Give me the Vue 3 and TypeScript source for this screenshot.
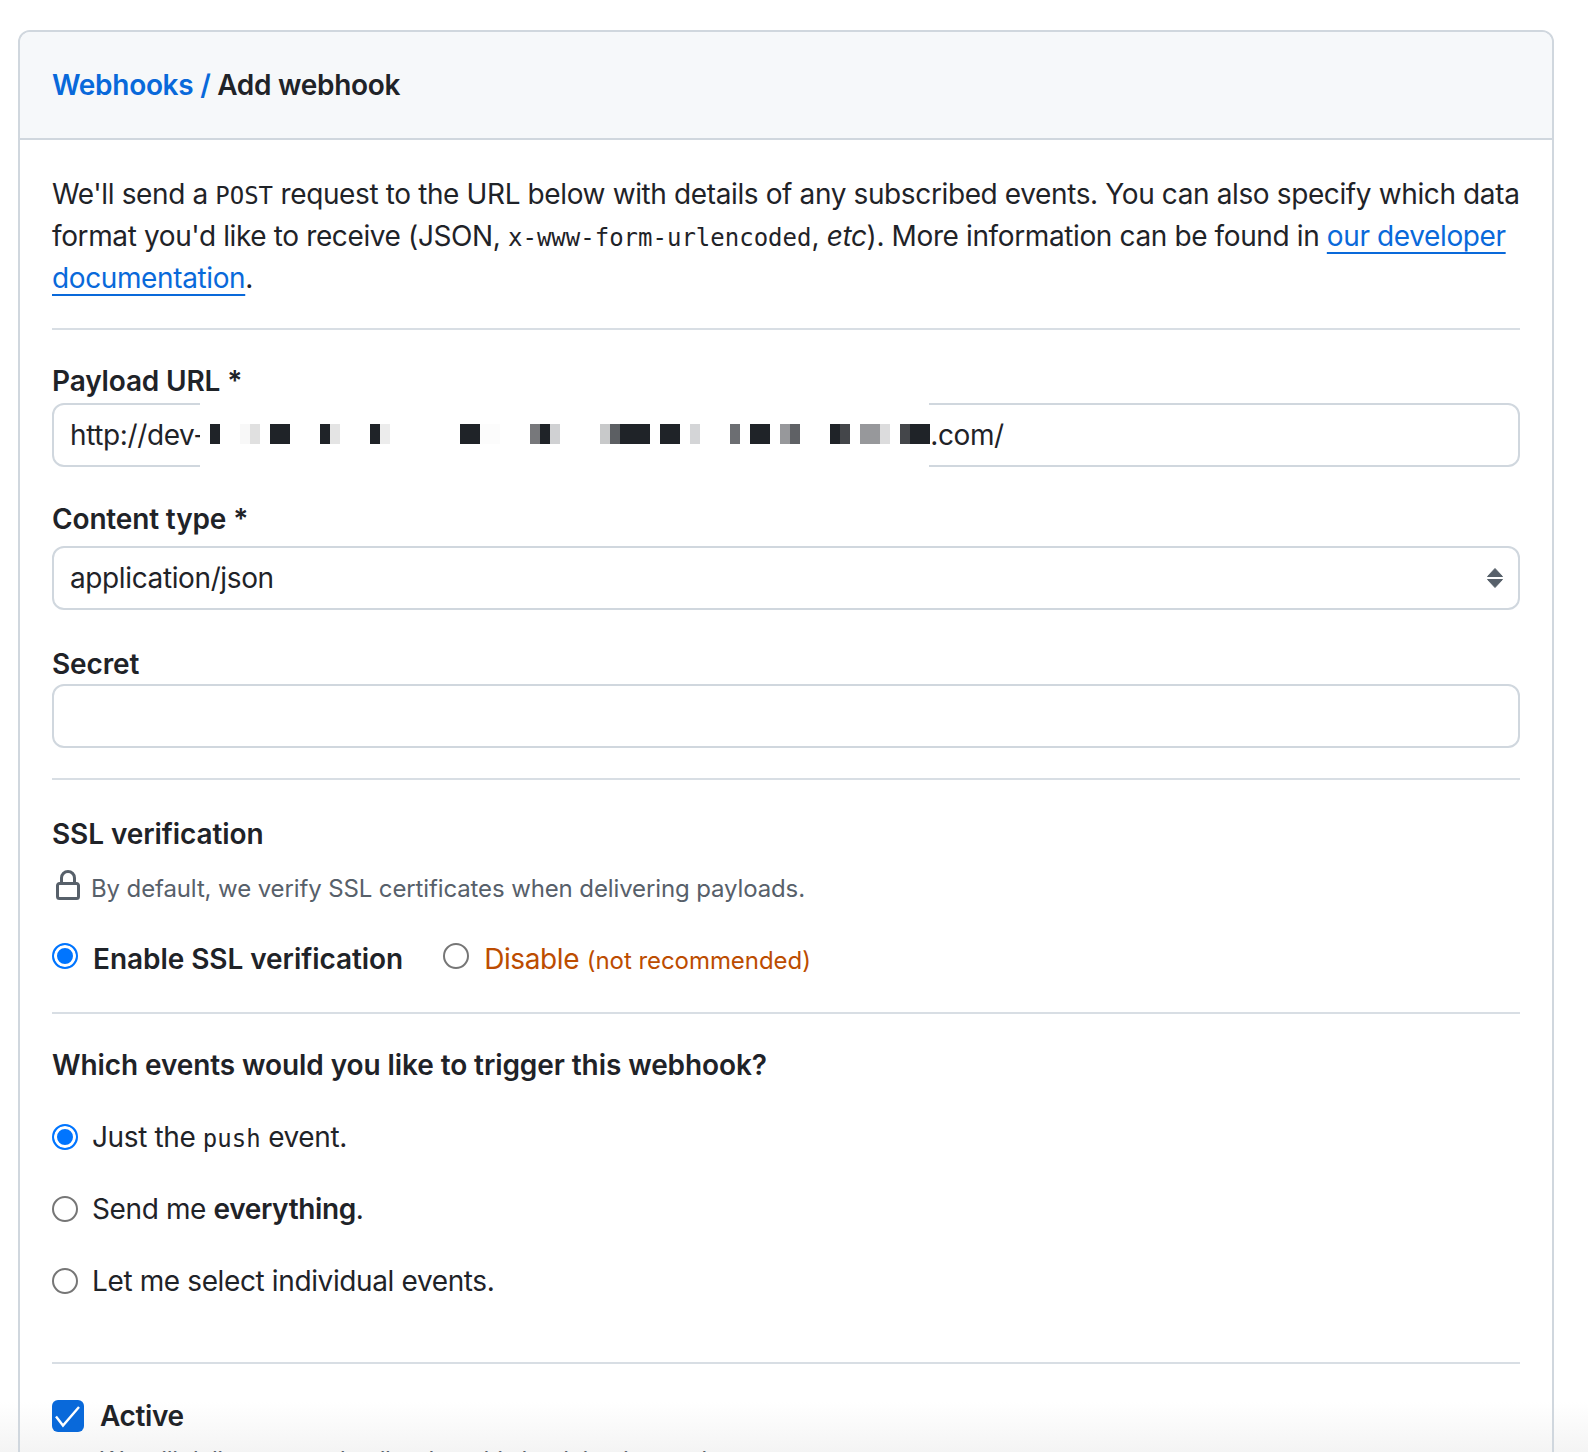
<script setup lang="ts">
const dark = '#1f2328'
const maskCells: string[] = Array(72).fill('transparent')
const paint: Array<[number, string]> = [
  [0, dark], [3, '#f8f8f8'], [4, '#e0e0e0'], [6, dark], [7, dark], [11, dark], [12, '#e4e4e4'],
  [16, dark], [17, '#ececec'], [25, dark], [26, dark], [27, '#fcfcfc'], [28, '#fcfcfc'],
  [32, '#77787b'], [33, dark], [34, '#d0d1d3'], [39, '#c8c9ca'], [40, '#5c5f63'], [41, dark], [42, dark], [43, dark],
  [45, dark], [46, dark], [48, '#d4d5d7'], [52, '#6c6e72'], [54, dark], [55, dark], [57, '#97989b'], [58, '#5f6165'],
  [62, dark], [63, '#44464a'], [65, '#97989b'], [66, '#97989b'], [67, '#dcdcdd'], [69, '#44464a'], [70, dark], [71, dark],
]
paint.forEach(([i, c]) => { maskCells[i] = c })
</script>

<template>
  <div class="page">
    <section class="card">
      <header class="card-head">
        <h1><a class="link">Webhooks</a> <span class="link">/</span> Add webhook</h1>
      </header>
      <div class="card-body">
        <p class="intro">We'll send a <code>POST</code> request to the URL below with details of any subscribed events. You can also specify which data format you'd like to receive (JSON, <code>x-www-form-urlencoded</code>, <em>etc</em>). More information can be found in <a class="link underline">our developer documentation</a>.</p>
        <hr class="rule rule-first" />

        <div class="field field-url">
          <label>Payload URL *</label>
          <div class="control url-control">
            <span>http://dev-</span><span class="url-gap"></span><span>s.com/</span>
            <div class="mask">
              <i v-for="(color, i) in maskCells" :key="i" :style="{ background: color }"></i>
            </div>
          </div>
        </div>

        <div class="field field-type">
          <label>Content type *</label>
          <div class="control select-control">
            <span>application/json</span>
            <svg class="updown" width="16" height="20" viewBox="0 0 16 20"><path d="M8 0.5 15.5 8.5H0.5Z M0.5 11.5H15.5L8 19.5Z" fill="#57606a" stroke="#57606a" stroke-width="1" stroke-linejoin="round"/></svg>
          </div>
        </div>

        <div class="field field-secret">
          <label>Secret</label>
          <div class="control"></div>
        </div>
        <hr class="rule rule-secret" />

        <h2 class="section-title ssl-title">SSL verification</h2>
        <p class="note">
          <svg class="lock" width="32" height="32" viewBox="0 0 16 16"><path fill="#57606a" d="M4 4a4 4 0 0 1 8 0v2h.25c.966 0 1.75.784 1.75 1.75v5.5A1.75 1.75 0 0 1 12.25 15h-8.5A1.75 1.75 0 0 1 2 13.25v-5.5C2 6.784 2.784 6 3.75 6H4Zm6.5 2V4a2.5 2.5 0 1 0-5 0v2ZM3.75 7.5a.25.25 0 0 0-.25.25v5.5c0 .138.112.25.25.25h8.5a.25.25 0 0 0 .25-.25v-5.5a.25.25 0 0 0-.25-.25Z"/></svg>
          <span>By default, we verify SSL certificates when delivering payloads.</span>
        </p>
        <div class="ssl-row">
          <label class="option strong"><input type="radio" name="ssl" checked /><span>Enable SSL verification</span></label>
          <label class="option danger"><input type="radio" name="ssl" /><span>Disable <small>(not recommended)</small></span></label>
        </div>
        <hr class="rule rule-ssl" />

        <h2 class="section-title">Which events would you like to trigger this webhook?</h2>
        <div class="events">
          <label class="option"><input type="radio" name="ev" checked /><span>Just the <code>push</code> event.</span></label>
          <label class="option"><input type="radio" name="ev" /><span>Send me <b>everything</b>.</span></label>
          <label class="option"><input type="radio" name="ev" /><span>Let me select individual events.</span></label>
        </div>
        <hr class="rule rule-events" />

        <div class="active">
          <span class="checkbox"><svg width="32" height="32" viewBox="0 0 32 32"><path d="M4 16.5 11 25.5 27 7" fill="none" stroke="#fff" stroke-width="2.4"/></svg></span>
          <b>Active</b>
        </div>
        <p class="active-note">We will deliver event details when this hook is triggered.</p>
      </div>
    </section>
  </div>
</template>

<style scoped>
.page {
  height: 1452px;
  overflow: hidden;
  padding: 30px 34px 0 18px;
  box-sizing: border-box;
  background: linear-gradient(to bottom, #fff 1402px, #f4f4f4 1452px);
  color: #1f2328;
  font-family: Inter, "Liberation Sans", sans-serif;
  font-size: 28px;
  line-height: 42px;
  letter-spacing: -0.38px;
}
.card {
  border: 2px solid #d0d7de;
  border-radius: 12px;
  height: 1600px;
}
.card-head {
  height: 106px;
  padding: 0 32px;
  display: flex;
  align-items: center;
  background: #f6f8fa;
  border-bottom: 2px solid #d0d7de;
  border-radius: 10px 10px 0 0;
}
h1 {
  margin: 0;
  font-size: 28px;
  font-weight: 600;
  line-height: 44px;
  letter-spacing: -0.3px;
  white-space: pre-wrap;
}
.link { color: #0969da; }
.underline {
  text-decoration: underline;
  text-underline-offset: 6px;
  text-decoration-thickness: 2px;
}
.card-body { padding: 33px 32px 0; }
.intro { margin: 0; }
code {
  font-family: "DejaVu Sans Mono", "Liberation Mono", monospace;
  font-size: 24px;
  line-height: 1;
  letter-spacing: 0;
}
em { font-style: italic; }
.rule {
  border: 0;
  height: 2px;
  margin: 0;
  background: #d8dee4;
}
.rule-first { margin-top: 29px; }
.field label {
  display: block;
  font-weight: 600;
  line-height: 40px;
  letter-spacing: -0.15px;
}
.field-url { margin-top: 31px; }
.field-url label { margin-bottom: 2px; }
.field-type { margin-top: 32px; }
.field-type label { margin-bottom: 7px; }
.field-secret { margin-top: 34px; }
.control {
  position: relative;
  height: 64px;
  padding: 0 16px;
  display: flex;
  align-items: center;
  border: 2px solid #d0d7de;
  border-radius: 12px;
  box-sizing: border-box;
  background: #fff;
}
.url-gap { width: 710px; }
.mask {
  position: absolute;
  left: 146px;
  top: -2px;
  bottom: -2px;
  width: 729px;
  padding-left: 10px;
  box-sizing: border-box;
  background: #fff;
  display: flex;
  align-items: center;
}
.mask i {
  flex: 0 0 10px;
  height: 20px;
  margin-top: -3px;
}
.select-control { justify-content: space-between; padding-right: 15px; }
.rule-secret { margin-top: 30px; }
.section-title {
  margin: 0;
  font-size: 28px;
  font-weight: 600;
  line-height: 42px;
  letter-spacing: -0.09px;
}
.ssl-title { margin-top: 33px; }
.note {
  margin: 13px 0 0;
  display: flex;
  align-items: center;
  color: #57606a;
  font-size: 24px;
  line-height: 42px;
  letter-spacing: -0.12px;
  gap: 7px;
}
.lock { flex: none; margin-top: -6px; }
.ssl-row {
  display: flex;
  gap: 40px;
  margin-top: 28px;
  height: 42px;
}
.option {
  display: flex;
  align-items: center;
  gap: 14px;
}
.option input {
  appearance: none;
  flex: none;
  width: 26px;
  height: 26px;
  margin: 0;
  border-radius: 50%;
  border: 2px solid #767676;
  background: #fff;
}
.option input:checked {
  border-color: #0075ff;
  background: #0075ff;
  box-shadow: inset 0 0 0 3px #fff;
}
.ssl-row input { margin-top: -7px; }
.ssl-row .option { gap: 15px; }
.strong { font-weight: 600; letter-spacing: -0.06px; }
.danger { color: #bc4c00; }
.danger small { font-size: 24px; line-height: 1; letter-spacing: -0.05px; }
.rule-ssl { margin-top: 32px; }
.section-title:not(.ssl-title) { margin-top: 30px; }
.events {
  margin-top: 30px;
  display: flex;
  flex-direction: column;
  gap: 30px;
}
.events b { font-weight: 600; }
.rule-events { margin-top: 60px; }
.active {
  margin-top: 36px;
  display: flex;
  align-items: center;
  gap: 16px;
  height: 32px;
}
.active b { font-weight: 600; }
.checkbox {
  width: 32px;
  height: 32px;
  border-radius: 6px;
  background: #0969da;
  display: block;
}
.checkbox svg { display: block; }
.active-note {
  margin: 8px 0 0 48px;
  color: #57606a;
  font-size: 24px;
}
</style>
